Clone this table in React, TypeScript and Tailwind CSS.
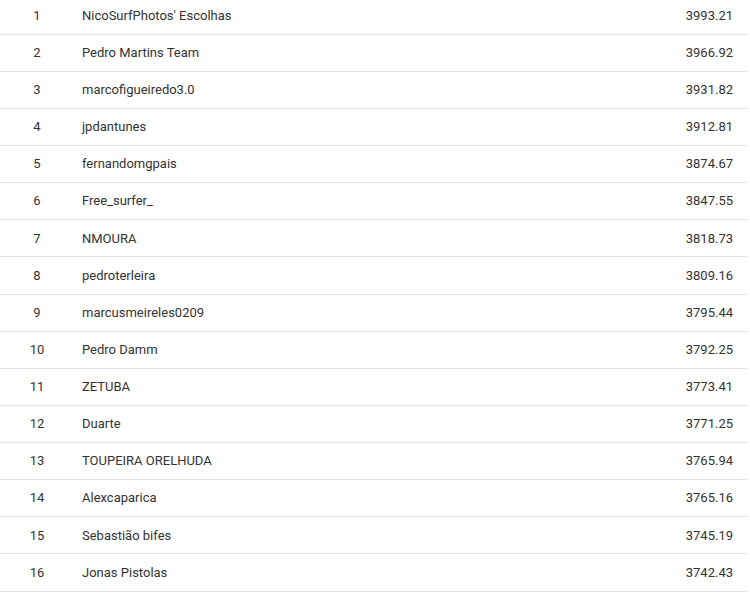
import React from "react";

const rows: [string, string][] = [
  ["NicoSurfPhotos' Escolhas", "3993.21"],
  ["Pedro Martins Team", "3966.92"],
  ["marcofigueiredo3.0", "3931.82"],
  ["jpdantunes", "3912.81"],
  ["fernandomgpais", "3874.67"],
  ["Free_surfer_", "3847.55"],
  ["NMOURA", "3818.73"],
  ["pedroterleira", "3809.16"],
  ["marcusmeireles0209", "3795.44"],
  ["Pedro Damm", "3792.25"],
  ["ZETUBA", "3773.41"],
  ["Duarte", "3771.25"],
  ["TOUPEIRA ORELHUDA", "3765.94"],
  ["Alexcaparica", "3765.16"],
  ["Sebastião bifes", "3745.19"],
  ["Jonas Pistolas", "3742.43"],
];

export default function App() {
  return (
    <div
      className="w-[750px] h-[596px] overflow-hidden bg-white text-[13px] text-[#333]"
      style={{ fontFamily: "Roboto, 'Liberation Sans', sans-serif" }}
    >
      <div className="w-[747px] -mt-[2.5px]">
        {rows.map(([name, score], i) => (
          <div
            key={i}
            className="flex items-center h-[37.13px] border-b border-[#e3e3e3]"
          >
            <div className="w-[74px] text-center">{i + 1}</div>
            <div className="flex-1 pl-[8px]">{name}</div>
            <div className="pr-[14px] text-right">{score}</div>
          </div>
        ))}
      </div>
    </div>
  );
}
